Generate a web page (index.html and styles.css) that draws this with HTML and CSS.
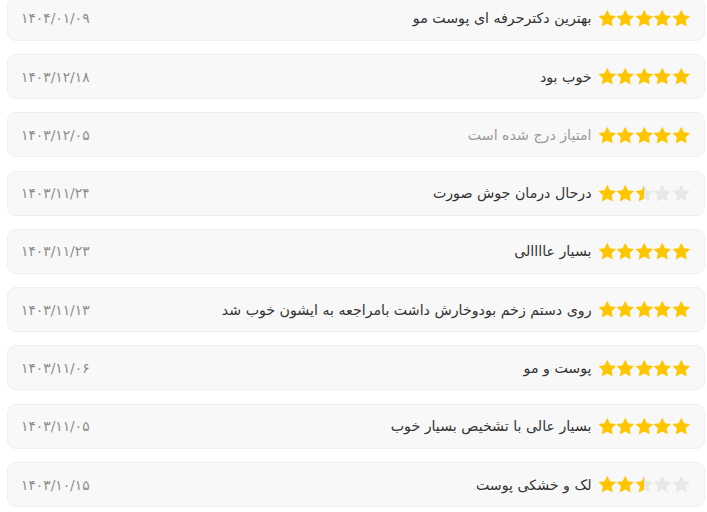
FILE: index.html
```html
<!DOCTYPE html>
<html lang="fa" dir="rtl">
<head>
<meta charset="utf-8">
<link rel="stylesheet" href="styles.css">
</head>
<body>
<svg width="0" height="0" class="defs">
  <defs>
    <path id="star" d="M12 .9l3.5 7.2 7.9 1.1-5.7 5.5 1.4 7.9L12 18.9l-7.1 3.7 1.4-7.9L.6 9.2l7.9-1.1z"/>
    <linearGradient id="half" x1="0" x2="1" y1="0" y2="0">
      <stop offset="50%" stop-color="#ffc600"/>
      <stop offset="50%" stop-color="#e8e8e8"/>
    </linearGradient>
  </defs>
</svg>
<div class="list">
  <div class="card">
    <div class="main">
      <div class="stars"><svg class="s on" viewBox="0 0 24 24"><use href="#star"/></svg><svg class="s on" viewBox="0 0 24 24"><use href="#star"/></svg><svg class="s on" viewBox="0 0 24 24"><use href="#star"/></svg><svg class="s on" viewBox="0 0 24 24"><use href="#star"/></svg><svg class="s on" viewBox="0 0 24 24"><use href="#star"/></svg></div>
      <span class="text">بهترین دکترحرفه ای پوست مو</span>
    </div>
    <span class="date" dir="ltr">۱۴۰۴/۰۱/۰۹</span>
  </div>
  <div class="card">
    <div class="main">
      <div class="stars"><svg class="s on" viewBox="0 0 24 24"><use href="#star"/></svg><svg class="s on" viewBox="0 0 24 24"><use href="#star"/></svg><svg class="s on" viewBox="0 0 24 24"><use href="#star"/></svg><svg class="s on" viewBox="0 0 24 24"><use href="#star"/></svg><svg class="s on" viewBox="0 0 24 24"><use href="#star"/></svg></div>
      <span class="text">خوب بود</span>
    </div>
    <span class="date" dir="ltr">۱۴۰۳/۱۲/۱۸</span>
  </div>
  <div class="card">
    <div class="main">
      <div class="stars"><svg class="s on" viewBox="0 0 24 24"><use href="#star"/></svg><svg class="s on" viewBox="0 0 24 24"><use href="#star"/></svg><svg class="s on" viewBox="0 0 24 24"><use href="#star"/></svg><svg class="s on" viewBox="0 0 24 24"><use href="#star"/></svg><svg class="s on" viewBox="0 0 24 24"><use href="#star"/></svg></div>
      <span class="text muted">امتیاز درج شده است</span>
    </div>
    <span class="date" dir="ltr">۱۴۰۳/۱۲/۰۵</span>
  </div>
  <div class="card">
    <div class="main">
      <div class="stars"><svg class="s on" viewBox="0 0 24 24"><use href="#star"/></svg><svg class="s on" viewBox="0 0 24 24"><use href="#star"/></svg><svg class="s half" viewBox="0 0 24 24"><use href="#star"/></svg><svg class="s off" viewBox="0 0 24 24"><use href="#star"/></svg><svg class="s off" viewBox="0 0 24 24"><use href="#star"/></svg></div>
      <span class="text">درحال درمان جوش صورت</span>
    </div>
    <span class="date" dir="ltr">۱۴۰۳/۱۱/۲۴</span>
  </div>
  <div class="card">
    <div class="main">
      <div class="stars"><svg class="s on" viewBox="0 0 24 24"><use href="#star"/></svg><svg class="s on" viewBox="0 0 24 24"><use href="#star"/></svg><svg class="s on" viewBox="0 0 24 24"><use href="#star"/></svg><svg class="s on" viewBox="0 0 24 24"><use href="#star"/></svg><svg class="s on" viewBox="0 0 24 24"><use href="#star"/></svg></div>
      <span class="text">بسیار عاااالی</span>
    </div>
    <span class="date" dir="ltr">۱۴۰۳/۱۱/۲۳</span>
  </div>
  <div class="card">
    <div class="main">
      <div class="stars"><svg class="s on" viewBox="0 0 24 24"><use href="#star"/></svg><svg class="s on" viewBox="0 0 24 24"><use href="#star"/></svg><svg class="s on" viewBox="0 0 24 24"><use href="#star"/></svg><svg class="s on" viewBox="0 0 24 24"><use href="#star"/></svg><svg class="s on" viewBox="0 0 24 24"><use href="#star"/></svg></div>
      <span class="text">روی دستم زخم بودوخارش داشت بامراجعه به ایشون خوب شد</span>
    </div>
    <span class="date" dir="ltr">۱۴۰۳/۱۱/۱۳</span>
  </div>
  <div class="card">
    <div class="main">
      <div class="stars"><svg class="s on" viewBox="0 0 24 24"><use href="#star"/></svg><svg class="s on" viewBox="0 0 24 24"><use href="#star"/></svg><svg class="s on" viewBox="0 0 24 24"><use href="#star"/></svg><svg class="s on" viewBox="0 0 24 24"><use href="#star"/></svg><svg class="s on" viewBox="0 0 24 24"><use href="#star"/></svg></div>
      <span class="text">پوست و مو</span>
    </div>
    <span class="date" dir="ltr">۱۴۰۳/۱۱/۰۶</span>
  </div>
  <div class="card">
    <div class="main">
      <div class="stars"><svg class="s on" viewBox="0 0 24 24"><use href="#star"/></svg><svg class="s on" viewBox="0 0 24 24"><use href="#star"/></svg><svg class="s on" viewBox="0 0 24 24"><use href="#star"/></svg><svg class="s on" viewBox="0 0 24 24"><use href="#star"/></svg><svg class="s on" viewBox="0 0 24 24"><use href="#star"/></svg></div>
      <span class="text">بسیار عالی با تشخیص بسیار خوب</span>
    </div>
    <span class="date" dir="ltr">۱۴۰۳/۱۱/۰۵</span>
  </div>
  <div class="card">
    <div class="main">
      <div class="stars"><svg class="s on" viewBox="0 0 24 24"><use href="#star"/></svg><svg class="s on" viewBox="0 0 24 24"><use href="#star"/></svg><svg class="s half" viewBox="0 0 24 24"><use href="#star"/></svg><svg class="s off" viewBox="0 0 24 24"><use href="#star"/></svg><svg class="s off" viewBox="0 0 24 24"><use href="#star"/></svg></div>
      <span class="text">لک و خشکی پوست</span>
    </div>
    <span class="date" dir="ltr">۱۴۰۳/۱۰/۱۵</span>
  </div>
</div>
</body>
</html>
```
FILE: styles.css
```css
html, body {
  margin: 0;
  padding: 0;
  background: #ffffff;
  overflow: hidden;
}
body {
  font-family: "DejaVu Sans", "Noto Sans", sans-serif;
  color: #333333;
}
.defs {
  position: absolute;
  width: 0;
  height: 0;
}
.list {
  display: flex;
  flex-direction: column;
  gap: 13.3px;
  margin: -4.3px 2px 0 7px;
}
.card {
  display: flex;
  align-items: center;
  justify-content: space-between;
  height: 45px;
  box-sizing: border-box;
  padding: 0 14px 0 13px;
  background: #f8f8f8;
  border: 1px solid #efefef;
  border-radius: 9px;
}
.main {
  display: flex;
  align-items: center;
  gap: 6px;
}
.stars {
  display: flex;
  direction: ltr;
  gap: 0;
}
.s {
  width: 18.5px;
  height: 18.5px;
  display: block;
}
.s.on { fill: #ffc600; }
.s.off { fill: #e8e8e8; }
.s.half { fill: url(#half); }
.text {
  font-size: 14.2px;
  color: #333333;
}
.text.muted {
  color: #9a9a9a;
}
.date {
  font-size: 13.8px;
  color: #8c8c8c;
}
```
